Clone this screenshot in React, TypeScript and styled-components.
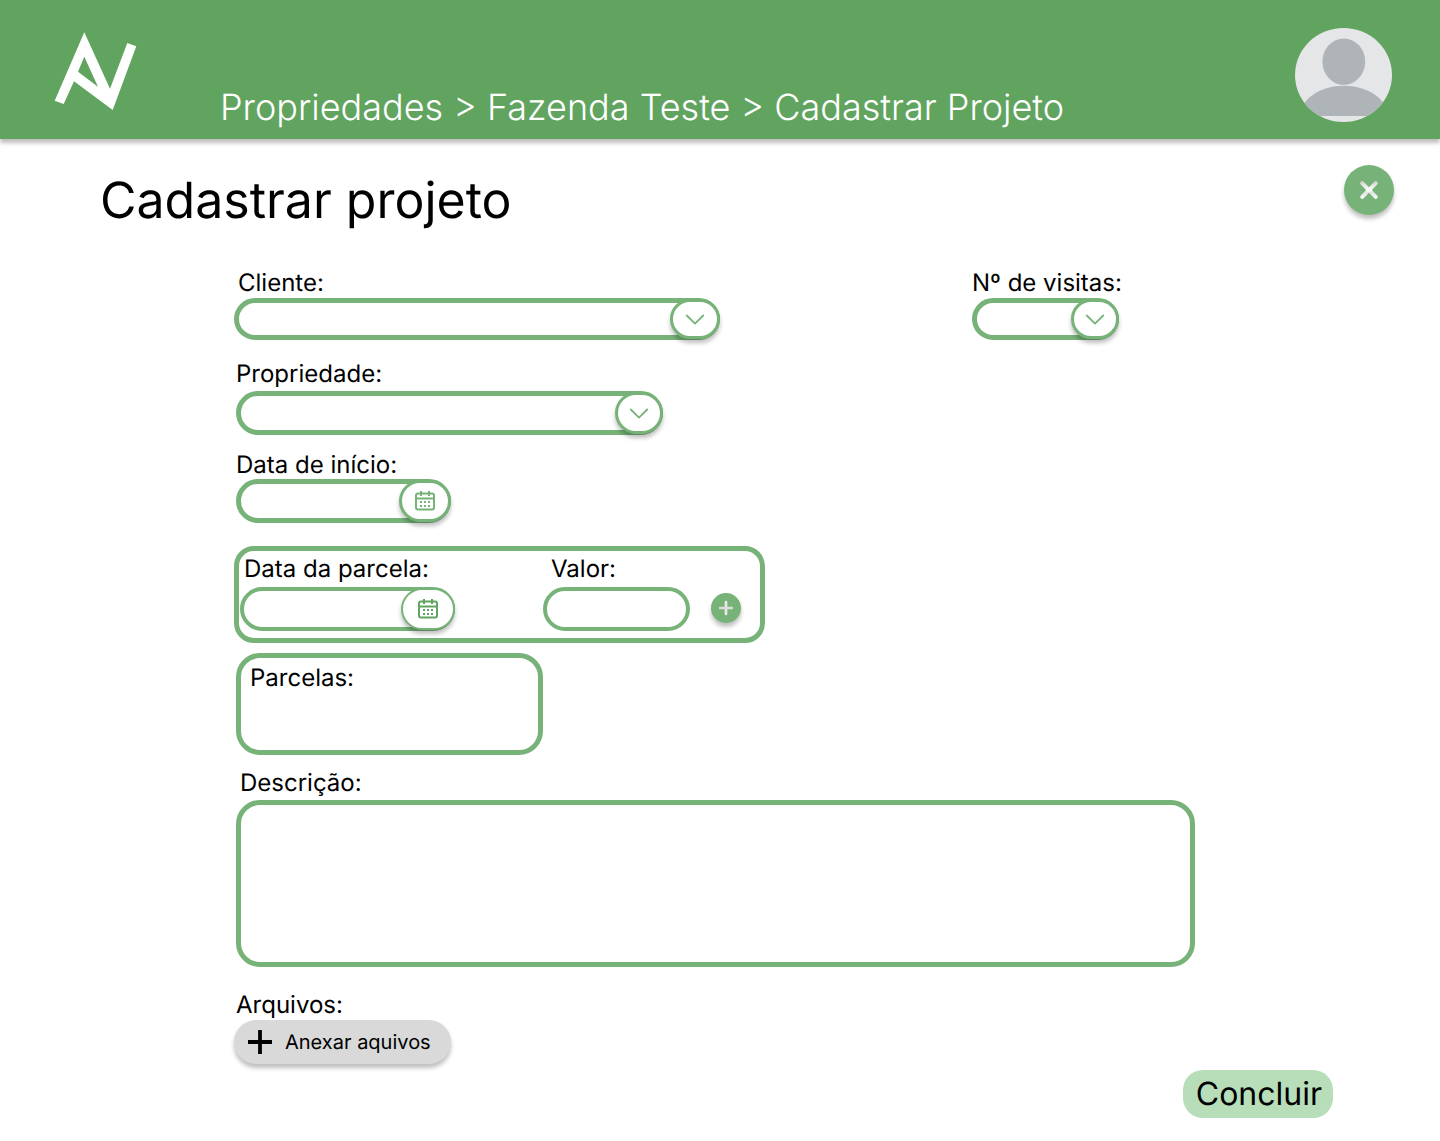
import React from "react";
import styled, { createGlobalStyle } from "styled-components";

const green = "#77b378";
const headerGreen = "#61a460";
const shadow = "0 4px 4px rgba(0, 0, 0, 0.25)";

const GlobalStyle = createGlobalStyle`
  *, *::before, *::after { box-sizing: border-box; }
  body { margin: 0; background: #fff; }
  body, button, input, select, textarea {
    font-family: Inter, "Liberation Sans", sans-serif;
    text-rendering: geometricPrecision;
    color: #000;
  }
`;

const Header = styled.header`
  display: flex;
  align-items: flex-start;
  min-height: 139px;
  padding: 28px 48px 12px 54px;
  background: ${headerGreen};
  box-shadow: ${shadow};
`;

const LogoLink = styled.a`
  display: block;
  flex: none;
  margin: 4px 82px 0 0;
  svg { display: block; }
`;

const Breadcrumb = styled.nav`
  flex: 1;
  align-self: flex-end;
  font-size: 36px;
  font-weight: 350;
  line-height: 40px;
  color: #fff;
  a { color: inherit; text-decoration: none; }
`;

const AvatarButton = styled.button`
  flex: none;
  padding: 0;
  border: 0;
  background: none;
  cursor: pointer;
  svg { display: block; }
`;

const Main = styled.main`
  padding: 26px 46px 23px 100px;
`;

const TitleRow = styled.div`
  display: flex;
  justify-content: space-between;
  align-items: flex-start;
`;

const Title = styled.h1`
  margin: 6px 0 0;
  font-size: 50px;
  line-height: 60px;
  font-weight: 400;
`;

const RoundButton = styled.button<{ $size: number }>`
  display: flex;
  flex: none;
  align-items: center;
  justify-content: center;
  width: ${(p) => p.$size}px;
  height: ${(p) => p.$size}px;
  padding: 0;
  border: 0;
  border-radius: 50%;
  background: ${green};
  box-shadow: ${shadow};
  cursor: pointer;
`;

const Form = styled.form`
  display: flex;
  flex-direction: column;
  padding: 38px 199px 0 134px;
`;

const TopRow = styled.div`
  display: grid;
  grid-template-columns: minmax(0, 486px) minmax(0, 1fr);
  column-gap: 252px;
`;

const Field = styled.div<{ $gap?: number; $top?: number }>`
  display: flex;
  flex-direction: column;
  align-items: flex-start;
  gap: ${(p) => p.$gap ?? 1}px;
  margin-top: ${(p) => p.$top ?? 0}px;
`;

const Label = styled.label<{ $indent?: number }>`
  padding-left: ${(p) => p.$indent ?? 2}px;
  font-size: 24px;
  line-height: 28px;
  white-space: nowrap;
`;

const Control = styled.div<{ $width: number; $height?: number; $inset?: number }>`
  position: relative;
  width: ${(p) => p.$width}px;
  max-width: 100%;
  height: ${(p) => p.$height ?? 44}px;
  margin-left: ${(p) => p.$inset ?? 0}px;
`;

const pill = `
  display: block;
  width: 100%;
  height: 100%;
  margin: 0;
  padding: 0 56px 0 16px;
  border-style: solid;
  border-color: ${green};
  border-radius: 22px;
  background: #fff;
  font-size: 20px;
  appearance: none;
`;

const Select = styled.select`
  ${pill}
  border-width: 5px;
`;

const TextInput = styled.input<{ $border?: number; $plain?: boolean }>`
  ${pill}
  border-width: ${(p) => p.$border ?? 5}px;
  padding-right: ${(p) => (p.$plain ? 16 : 56)}px;
`;

const knob = `
  position: absolute;
  top: 1px;
  right: 0;
  bottom: 1px;
  display: flex;
  align-items: center;
  justify-content: center;
  padding: 0;
  border-style: solid;
  border-color: ${green};
  border-radius: 21px;
  background: #fff;
  box-shadow: ${shadow};
`;

const SelectKnob = styled.span<{ $width: number }>`
  ${knob}
  width: ${(p) => p.$width}px;
  border-width: 3px;
  pointer-events: none;
`;

const DateKnob = styled.button<{ $border?: number }>`
  ${knob}
  width: ${(p) => (p.$border ? 54 : 52)}px;
  border-width: ${(p) => p.$border ?? 3}px;
  cursor: pointer;
`;

const InstallmentBox = styled.fieldset`
  display: flex;
  align-items: flex-end;
  width: 531px;
  max-width: 100%;
  min-width: 0;
  margin: 23px 0 0;
  padding: 4px 19px 7px 1px;
  border: 5px solid ${green};
  border-radius: 20px;
`;

const ValueField = styled(Field)`
  margin-left: 88px;
`;

const AddSlot = styled.div`
  margin: 0 0 8px 21px;
`;

const InstallmentList = styled.section`
  width: 307px;
  max-width: 100%;
  min-height: 102px;
  margin: 10px 0 0 2px;
  padding: 6px 9px;
  border: 5px solid ${green};
  border-radius: 24px;
`;

const ListTitle = styled.h2`
  margin: 0;
  font-size: 24px;
  line-height: 28px;
  font-weight: 400;
`;

const DescriptionField = styled(Field)`
  align-items: stretch;
`;

const TextArea = styled.textarea`
  display: block;
  height: 167px;
  margin: 0 0 0 2px;
  padding: 12px 16px;
  border: 5px solid ${green};
  border-radius: 24px;
  background: #fff;
  font-size: 20px;
  resize: none;
`;

const AttachButton = styled.button`
  display: flex;
  align-items: center;
  gap: 13px;
  height: 44px;
  padding: 0 20px 0 14px;
  border: 0;
  border-radius: 22px;
  background: #d9d9d9;
  box-shadow: ${shadow};
  font-size: 20px;
  line-height: 24px;
  white-space: nowrap;
  cursor: pointer;
`;

const Actions = styled.div`
  display: flex;
  justify-content: flex-end;
  margin-top: 6px;
  padding-right: 61px;
`;

const SubmitButton = styled.button`
  height: 48px;
  padding: 0 11px 0 13px;
  border: 0;
  border-radius: 20px;
  background: #b7deb8;
  font-size: 32px;
  line-height: 40px;
  cursor: pointer;
`;

const Logo = () => (
  <svg width="84" height="79" viewBox="54 32 84 79" aria-hidden="true">
    <path
      fill="#fff"
      fillRule="evenodd"
      d="M84.3 32.3 110 88.7 127.3 43 136.3 46.3 112.7 110 74 81.3 63.7 104 54.7 100.7ZM84.3 56.7 78 71.7 98 86.7Z"
    />
  </svg>
);

const Avatar = () => (
  <svg width="97" height="94" viewBox="0 0 97 94" aria-hidden="true">
    <defs>
      <clipPath id="avatar-clip">
        <ellipse cx="48.5" cy="47" rx="48.5" ry="47" />
      </clipPath>
    </defs>
    <g clipPath="url(#avatar-clip)">
      <rect width="97" height="94" fill="#e4e6e8" />
      <ellipse cx="48.8" cy="33.7" rx="21.4" ry="23.2" fill="#aeb4b8" />
      <path d="M5 88C6 70 26 57.7 48.8 57.7S92 70 93 88Z" fill="#aeb4b8" />
    </g>
  </svg>
);

const CloseIcon = () => (
  <svg width="20" height="20" viewBox="0 0 20 20" fill="none" aria-hidden="true">
    <defs>
      <linearGradient id="close-fill" gradientUnits="userSpaceOnUse" x1="0" y1="1" x2="0" y2="19">
        <stop offset="0" stopColor="#cfcfcf" />
        <stop offset="0.5" stopColor="#fff" />
        <stop offset="0.65" stopColor="#e2e2e2" />
        <stop offset="1" stopColor="#fff" />
      </linearGradient>
    </defs>
    <path d="M3.2 3.2 16.8 16.8M16.8 3.2 3.2 16.8" stroke="url(#close-fill)" strokeWidth="4" strokeLinecap="round" />
  </svg>
);

const AddIcon = () => (
  <svg width="16" height="16" viewBox="0 0 16 16" fill="none" aria-hidden="true">
    <path d="M8 2V14" stroke="#ececec" strokeWidth="2.6" strokeLinecap="round" />
    <path d="M2 8H14" stroke="#d9ddd9" strokeWidth="2.4" strokeLinecap="round" />
  </svg>
);

const Chevron = () => (
  <svg width="20" height="12" viewBox="0 0 20 12" fill="none" aria-hidden="true">
    <path d="M1.8 2.5 10 10.6 18.2 2.5" stroke={green} strokeWidth="1.8" strokeLinecap="round" strokeLinejoin="round" />
  </svg>
);

const CalendarIcon = ({ color }: { color: string }) => (
  <svg width="20" height="20" viewBox="0 0 20 20" fill="none" aria-hidden="true">
    <rect x="1" y="2.5" width="18" height="16" rx="2" stroke={color} strokeWidth="2" />
    <path d="M1 7.5H19M6 0V5M14 0V5" stroke={color} strokeWidth="2" />
    <path
      d="M5 10h2v2H5zM9 10h2v2H9zM13 10h2v2h-2zM5 14h2v2H5zM9 14h2v2H9zM13 14h2v2h-2z"
      fill={color}
    />
  </svg>
);

const PlusIcon = () => (
  <svg width="24" height="24" viewBox="0 0 24 24" aria-hidden="true">
    <path d="M12 0V24M0 12H24" stroke="#000" strokeWidth="3.8" />
  </svg>
);

export default function App() {
  return (
    <>
      <GlobalStyle />
      <Header>
        <LogoLink href="#" aria-label="Início">
          <Logo />
        </LogoLink>
        <Breadcrumb>
          <a href="#propriedades">Propriedades</a> &gt; <a href="#fazenda">Fazenda Teste</a> &gt; Cadastrar Projeto
        </Breadcrumb>
        <AvatarButton type="button" aria-label="Perfil">
          <Avatar />
        </AvatarButton>
      </Header>

      <Main>
        <TitleRow>
          <Title>Cadastrar projeto</Title>
          <RoundButton $size={50} type="button" aria-label="Fechar">
            <CloseIcon />
          </RoundButton>
        </TitleRow>

        <Form id="projeto" onSubmit={(e) => e.preventDefault()}>
          <TopRow>
            <Field>
              <Label htmlFor="cliente" $indent={4}>Cliente:</Label>
              <Control $width={486} $height={42}>
                <Select id="cliente" />
                <SelectKnob $width={50}><Chevron /></SelectKnob>
              </Control>
            </Field>
            <Field>
              <Label htmlFor="visitas" $indent={0}>Nº de visitas:</Label>
              <Control $width={147} $height={42}>
                <Select id="visitas" />
                <SelectKnob $width={48}><Chevron /></SelectKnob>
              </Control>
            </Field>
          </TopRow>

          <Field $top={20} $gap={3}>
            <Label htmlFor="propriedade">Propriedade:</Label>
            <Control $width={427} $inset={2}>
              <Select id="propriedade" />
              <SelectKnob $width={48}><Chevron /></SelectKnob>
            </Control>
          </Field>

          <Field $top={16} $gap={0}>
            <Label htmlFor="inicio">Data de início:</Label>
            <Control $width={215} $inset={2}>
              <TextInput id="inicio" type="text" />
              <DateKnob type="button" aria-label="Escolher data de início">
                <CalendarIcon color={green} />
              </DateKnob>
            </Control>
          </Field>

          <InstallmentBox>
            <Field $gap={4}>
              <Label htmlFor="parcela" $indent={4}>Data da parcela:</Label>
              <Control $width={215}>
                <TextInput id="parcela" type="text" $border={4} />
                <DateKnob type="button" $border={2} aria-label="Escolher data da parcela">
                  <CalendarIcon color={headerGreen} />
                </DateKnob>
              </Control>
            </Field>
            <ValueField $gap={4}>
              <Label htmlFor="valor" $indent={8}>Valor:</Label>
              <Control $width={147}>
                <TextInput id="valor" type="text" $border={4} $plain />
              </Control>
            </ValueField>
            <AddSlot>
              <RoundButton $size={30} type="button" aria-label="Adicionar parcela">
                <AddIcon />
              </RoundButton>
            </AddSlot>
          </InstallmentBox>

          <InstallmentList>
            <ListTitle>Parcelas:</ListTitle>
          </InstallmentList>

          <DescriptionField $top={14} $gap={3}>
            <Label htmlFor="descricao" $indent={6}>Descrição:</Label>
            <TextArea id="descricao" />
          </DescriptionField>

          <Field $top={24}>
            <Label htmlFor="arquivos">Arquivos:</Label>
            <AttachButton id="arquivos" type="button">
              <PlusIcon />
              Anexar aquivos
            </AttachButton>
          </Field>
        </Form>

        <Actions>
          <SubmitButton type="submit" form="projeto">Concluir</SubmitButton>
        </Actions>
      </Main>
    </>
  );
}
